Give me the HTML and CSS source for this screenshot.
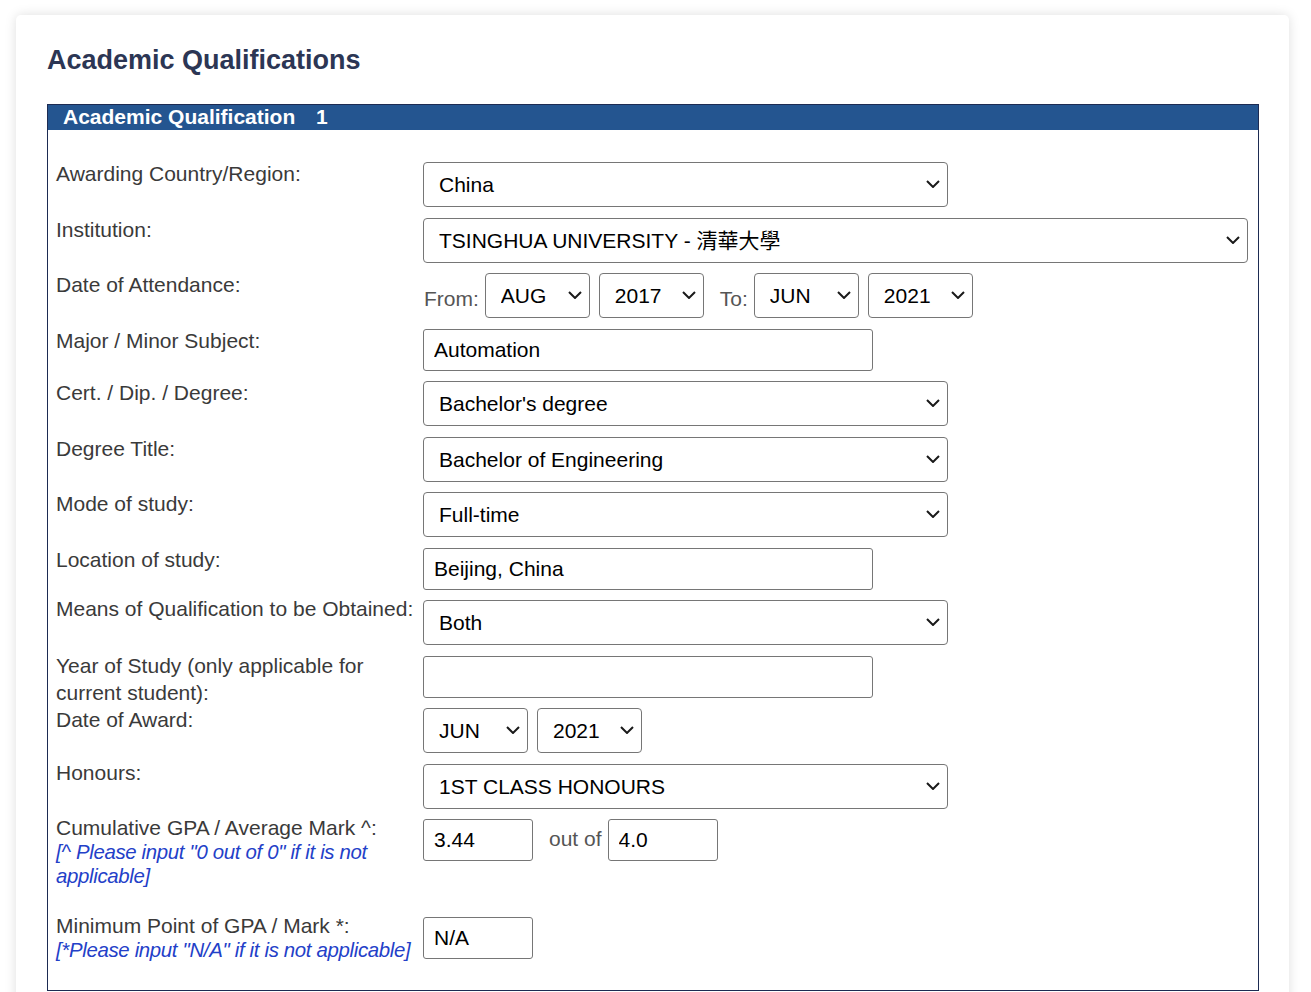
FILE: index.html
```html
<!DOCTYPE html>
<html lang="en">
<head>
<meta charset="utf-8">
<title>Academic Qualifications</title>
<link rel="stylesheet" href="styles.css">
</head>
<body>
<div class="card">
  <h2 class="title">Academic Qualifications</h2>
  <div class="qual">
    <div class="qual-head">Academic Qualification <span class="qual-num">1</span></div>
    <div class="qual-body">

      <div class="field-label">Awarding Country/Region:</div>
      <div class="field-control">
        <span class="sel sel--wide"><select class="select"><option>China</option></select><svg class="chev" viewBox="0 0 14 8"><path d="M1 1l6 6 6-6"/></svg></span>
      </div>

      <div class="field-label">Institution:</div>
      <div class="field-control">
        <span class="sel sel--full"><select class="select"><option>TSINGHUA UNIVERSITY - 清華大學</option></select><svg class="chev" viewBox="0 0 14 8"><path d="M1 1l6 6 6-6"/></svg></span>
      </div>

      <div class="field-label">Date of Attendance:</div>
      <div class="field-control date-row">
        <span class="date-lbl date-lbl--from">From:</span>
        <span class="sel sel--sm"><select class="select"><option>AUG</option></select><svg class="chev" viewBox="0 0 14 8"><path d="M1 1l6 6 6-6"/></svg></span>
        <span class="sel sel--sm"><select class="select"><option>2017</option></select><svg class="chev" viewBox="0 0 14 8"><path d="M1 1l6 6 6-6"/></svg></span>
        <span class="date-lbl date-lbl--to">To:</span>
        <span class="sel sel--sm"><select class="select"><option>JUN</option></select><svg class="chev" viewBox="0 0 14 8"><path d="M1 1l6 6 6-6"/></svg></span>
        <span class="sel sel--sm"><select class="select"><option>2021</option></select><svg class="chev" viewBox="0 0 14 8"><path d="M1 1l6 6 6-6"/></svg></span>
      </div>

      <div class="field-label">Major / Minor Subject:</div>
      <div class="field-control"><input class="input input--wide" type="text" value="Automation"></div>

      <div class="field-label">Cert. / Dip. / Degree:</div>
      <div class="field-control">
        <span class="sel sel--wide"><select class="select"><option>Bachelor's degree</option></select><svg class="chev" viewBox="0 0 14 8"><path d="M1 1l6 6 6-6"/></svg></span>
      </div>

      <div class="field-label">Degree Title:</div>
      <div class="field-control">
        <span class="sel sel--wide"><select class="select"><option>Bachelor of Engineering</option></select><svg class="chev" viewBox="0 0 14 8"><path d="M1 1l6 6 6-6"/></svg></span>
      </div>

      <div class="field-label">Mode of study:</div>
      <div class="field-control">
        <span class="sel sel--wide"><select class="select"><option>Full-time</option></select><svg class="chev" viewBox="0 0 14 8"><path d="M1 1l6 6 6-6"/></svg></span>
      </div>

      <div class="field-label">Location of study:</div>
      <div class="field-control"><input class="input input--wide" type="text" value="Beijing, China"></div>

      <div class="field-label field-label--up">Means of Qualification to be Obtained:</div>
      <div class="field-control">
        <span class="sel sel--wide"><select class="select"><option>Both</option></select><svg class="chev" viewBox="0 0 14 8"><path d="M1 1l6 6 6-6"/></svg></span>
      </div>

      <div class="field-label field-label--tall">Year of Study (only applicable for current student):</div>
      <div class="field-control"><input class="input input--wide" type="text" value=""></div>

      <div class="field-label">Date of Award:</div>
      <div class="field-control date-row">
        <span class="sel sel--sm"><select class="select"><option>JUN</option></select><svg class="chev" viewBox="0 0 14 8"><path d="M1 1l6 6 6-6"/></svg></span>
        <span class="sel sel--sm"><select class="select"><option>2021</option></select><svg class="chev" viewBox="0 0 14 8"><path d="M1 1l6 6 6-6"/></svg></span>
      </div>

      <div class="field-label field-label--up">Honours:</div>
      <div class="field-control">
        <span class="sel sel--wide"><select class="select"><option>1ST CLASS HONOURS</option></select><svg class="chev" viewBox="0 0 14 8"><path d="M1 1l6 6 6-6"/></svg></span>
      </div>

      <div class="field-label field-label--note">Cumulative GPA / Average Mark ^:<br><span class="hint">[^ Please input "0 out of 0" if it is not applicable]</span></div>
      <div class="field-control gpa-row">
        <input class="input input--sm" type="text" value="3.44">
        <span class="out-of">out of</span>
        <input class="input input--sm" type="text" value="4.0">
      </div>

      <div class="field-label field-label--note">Minimum Point of GPA / Mark *:<br><span class="hint">[*Please input "N/A" if it is not applicable]</span></div>
      <div class="field-control"><input class="input input--sm" type="text" value="N/A"></div>

    </div>
  </div>
</div>
</body>
</html>
```

FILE: styles.css
```css
* {
  box-sizing: border-box;
}

html, body {
  margin: 0;
  padding: 0;
  background: #ffffff;
}

body {
  font-family: "Liberation Sans", Arial, "Noto Sans CJK TC", sans-serif;
  color: #333333;
  padding: 15px 22px 0 16px;
}

.card {
  background: #ffffff;
  border-radius: 5px;
  box-shadow: 0 0 12px rgba(0, 0, 0, 0.13);
  padding: 29.5px 30px 20px 31px;
}

.title {
  margin: 0 0 28.5px 0;
  font-size: 27px;
  font-weight: bold;
  line-height: 31px;
  color: #2c3654;
}

.qual {
  border: 1px solid #1d2b52;
}

.qual-head {
  height: 25px;
  background: #245590;
  color: #ffffff;
  font-size: 21px;
  font-weight: bold;
  line-height: 23px;
  padding: 0 0 0 15px;
}

.qual-num {
  margin-left: 15px;
}

.qual-body {
  display: grid;
  grid-template-columns: 362px 1fr;
  column-gap: 5px;
  row-gap: 8.5px;
  padding: 32px 8px 8px 8px;
}

.field-label {
  font-size: 21px;
  line-height: 22px;
  color: #3a3a3a;
  padding-top: 1px;
}

.field-label--up {
  padding-top: 0;
  margin-top: -2px;
}

.field-label--tall {
  padding-top: 0;
  line-height: 27px;
  margin: -3.5px 0 -6.5px 0;
}

.field-label--note {
  padding-top: 0;
  line-height: 23.5px;
  margin-top: -2.75px;
  padding-bottom: 19.75px;
}

.hint {
  font-size: 20.4px;
  font-style: italic;
  letter-spacing: -0.33px;
  color: #2340c8;
}

.field-control {
  padding-bottom: 2px;
  display: flex;
  align-items: flex-start;
}

.sel {
  position: relative;
  display: inline-block;
  height: 45px;
}

.sel--wide { width: 525px; }
.sel--full { width: 825px; }
.sel--sm { width: 105px; }

.select {
  -webkit-appearance: none;
  appearance: none;
  width: 100%;
  height: 45px;
  margin: 0;
  border: 1px solid #767676;
  border-radius: 4px;
  background: #ffffff;
  padding: 0 30px 0 15px;
  font-family: "Liberation Sans", Arial, "Noto Sans CJK TC", sans-serif;
  font-size: 21px;
  color: #000000;
}

.chev {
  position: absolute;
  right: 8px;
  top: 18px;
  width: 14px;
  height: 8px;
  pointer-events: none;
}

.chev path {
  fill: none;
  stroke: #1a1a1a;
  stroke-width: 2;
}

.date-row .sel + .sel {
  margin-left: 9px;
}

.date-lbl {
  font-size: 21px;
  line-height: 22px;
  color: #555555;
  padding-top: 14.5px;
}

.date-lbl--from {
  margin-left: 1px;
  margin-right: 6px;
}

.date-lbl--to {
  margin-left: 16px;
  margin-right: 6px;
}

.input {
  height: 42px;
  margin: 0;
  border: 1px solid #767676;
  border-radius: 3px;
  padding: 0 10px;
  background: #ffffff;
  font-family: "Liberation Sans", Arial, sans-serif;
  font-size: 21px;
  color: #000000;
}

.input--wide { width: 450px; }
.input--sm { width: 110px; }

.out-of {
  font-size: 21px;
  line-height: 22px;
  color: #555555;
  padding-top: 9px;
  margin: 0 6px 0 16px;
}
```
